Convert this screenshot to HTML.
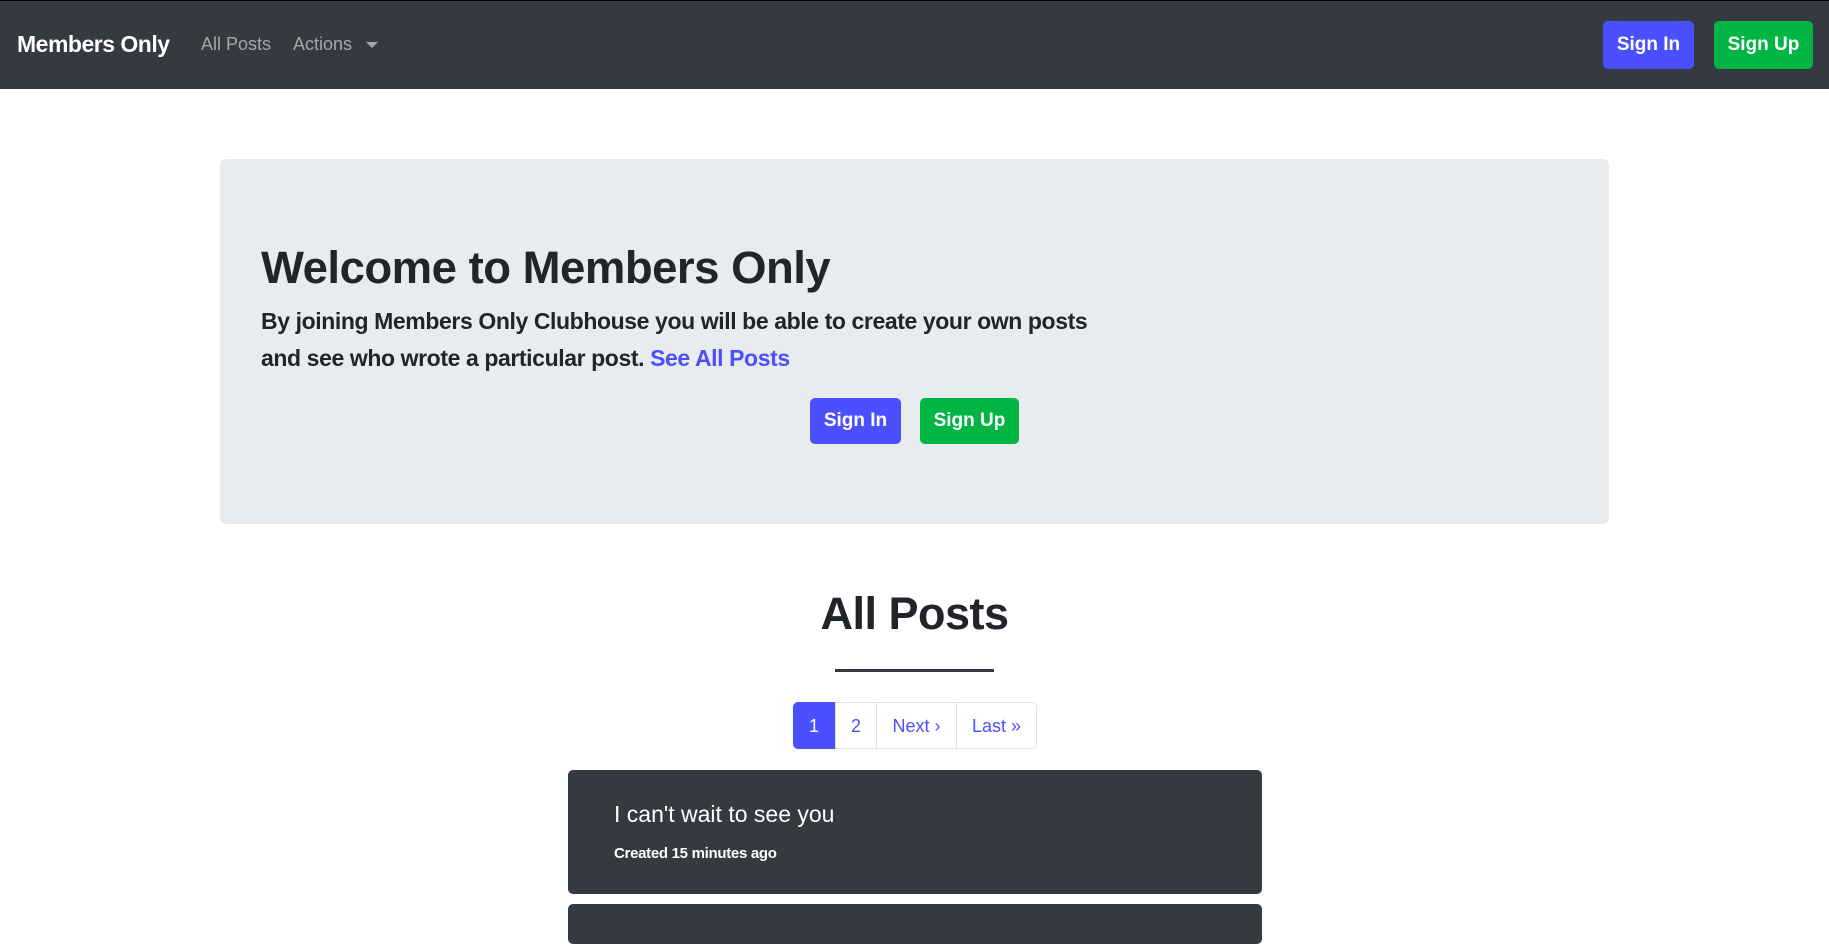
<!DOCTYPE html>
<html><head><meta charset="utf-8"><style>
*{box-sizing:border-box;margin:0;padding:0}
body{width:1829px;height:922px;overflow:hidden;background:#fff;font-family:"Liberation Sans",sans-serif;color:#212529;position:relative}
.nav{position:absolute;left:0;top:0;width:1829px;height:89px;background:#343a40;border-top:1px solid #000}
.abs{position:absolute;white-space:nowrap}
.btn{position:absolute;border-radius:5px;color:#fff;font-weight:bold;font-size:19px;display:flex;align-items:center;justify-content:center}
.blue{background:#4a50ff}.green{background:#00b544}
.jumbo{position:absolute;left:220px;top:159px;width:1389px;height:365px;background:#e9ecef;border-radius:6px}
.pg{position:absolute;top:702px;height:47px;border:1px solid #dee2e6;color:#4a50ff;font-size:18px;display:flex;align-items:center;justify-content:center;padding-top:2px}
.card{position:absolute;left:568px;width:694px;background:#343a40;border-radius:5px}
</style></head><body>
<div class="nav">
<div class="abs" style="left:17px;top:30px;font-size:23px;color:#fff;font-weight:bold;letter-spacing:-0.5px">Members Only</div>
<div class="abs" style="left:201px;top:33px;font-size:18px;color:rgba(255,255,255,.55)">All Posts</div>
<div class="abs" style="left:293px;top:33px;font-size:18px;color:rgba(255,255,255,.55)">Actions</div>
<div class="abs" style="left:366px;top:41px;width:0;height:0;border-left:6px solid transparent;border-right:6px solid transparent;border-top:6px solid rgba(255,255,255,.55)"></div>
<div class="btn blue" style="left:1603px;top:20px;width:91px;height:48px">Sign In</div>
<div class="btn green" style="left:1714px;top:20px;width:99px;height:48px">Sign Up</div>
</div>
<div class="jumbo"></div>
<div class="abs" style="left:261px;top:242px;font-size:45.5px;font-weight:bold;letter-spacing:-0.5px">Welcome to Members Only</div>
<div class="abs" style="left:261px;top:303px;font-size:23px;line-height:37px;font-weight:bold;letter-spacing:-0.4px">By joining Members Only Clubhouse you will be able to create your own posts<br>and see who wrote a particular post. <span style="color:#4a50ff">See All Posts</span></div>
<div class="btn blue" style="left:810px;top:398px;width:91px;height:46px">Sign In</div>
<div class="btn green" style="left:920px;top:398px;width:99px;height:46px">Sign Up</div>
<div class="abs" style="left:0;width:1829px;text-align:center;top:588px;font-size:45px;font-weight:bold;letter-spacing:-0.5px">All Posts</div>
<div class="abs" style="left:835px;top:669px;width:159px;height:3px;background:#343a40"></div>
<div class="pg" style="left:793px;width:42px;background:#4a50ff;color:#fff;border-color:#4a50ff;border-radius:5px 0 0 5px">1</div>
<div class="pg" style="left:835px;width:42px">2</div>
<div class="pg" style="left:876px;width:81px">Next ›</div>
<div class="pg" style="left:956px;width:81px;border-radius:0 5px 5px 0">Last »</div>
<div class="card" style="top:770px;height:124px">
<div class="abs" style="left:46px;top:31px;color:#fff;font-size:23px">I can't wait to see you</div>
<div class="abs" style="left:46px;top:75px;color:#fff;font-size:15px;font-weight:bold;letter-spacing:-0.3px">Created 15 minutes ago</div>
</div>
<div class="card" style="top:904px;height:40px"></div>
</body></html>
